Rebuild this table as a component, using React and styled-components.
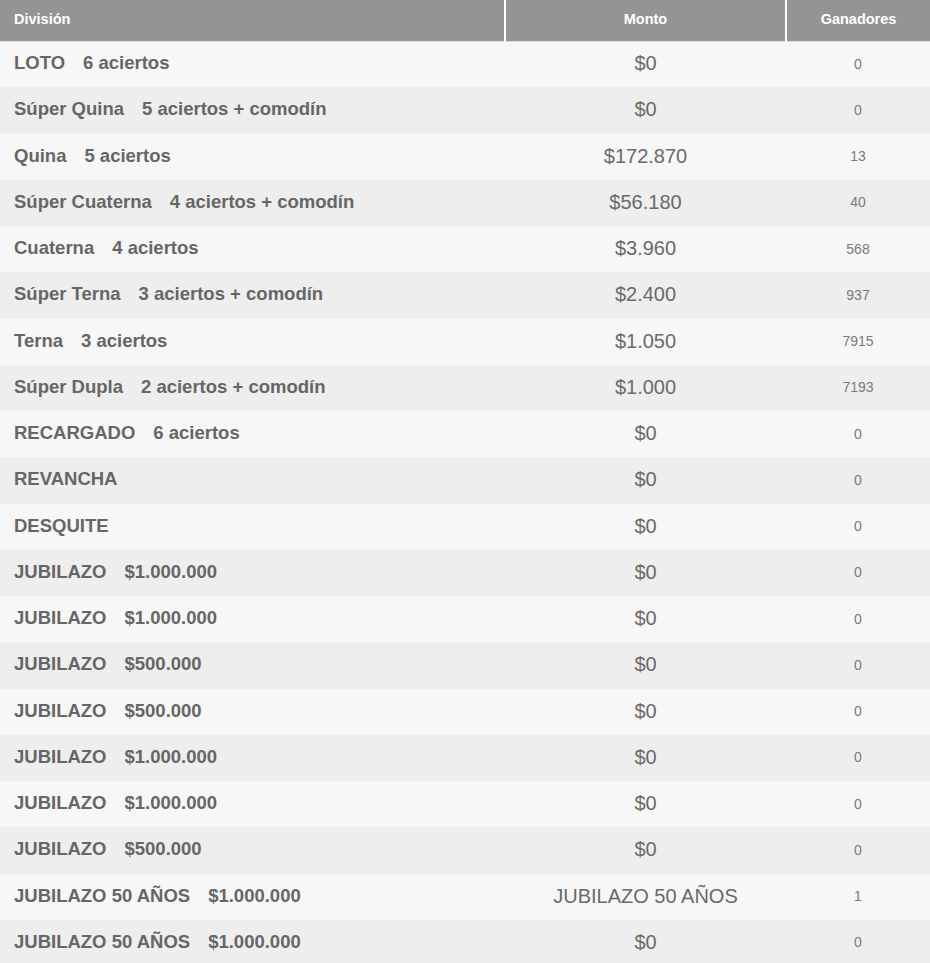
import React from 'react'
import styled, {createGlobalStyle} from 'styled-components'

const GlobalStyle = createGlobalStyle`
  html, body {
    margin: 0;
    padding: 0;
    background: #ffffff;
  }
  body {
    font-family: "Liberation Sans", Arial, sans-serif;
  }
`

const Table = styled.table`
  width: 930px;
  border-collapse: collapse;
  table-layout: fixed;
`

const HeadCell = styled.th`
  height: 41px;
  box-sizing: border-box;
  padding: 0 14px 2px;
  background: #949494;
  color: #ffffff;
  font-size: 14.5px;
  font-weight: bold;
  text-align: ${props => props.align || 'center'};
  border-left: ${props => props.first ? 'none' : '2px solid #ffffff'};
  border-bottom: 1px solid #dcdcdc;
  vertical-align: middle;
`

const Row = styled.tr`
  height: 46.25px;
  background: ${props => props.odd ? '#eeeeee' : '#f7f7f7'};
`

const DivisionCell = styled.td`
  padding: 0 14px 2px;
  color: #666666;
  font-size: 18.5px;
  font-weight: bold;
  white-space: nowrap;
`

const Detail = styled.span`
  margin-left: 18px;
`

const MontoCell = styled.td`
  text-align: center;
  color: #6a6a6a;
  font-size: 20px;
  padding-bottom: 2px;
`

const GanadoresCell = styled.td`
  text-align: center;
  color: #7a7a7a;
  font-size: 14px;
  padding-bottom: 2px;
`

const rows = [
  ['LOTO', '6 aciertos', '$0', '0'],
  ['Súper Quina', '5 aciertos + comodín', '$0', '0'],
  ['Quina', '5 aciertos', '$172.870', '13'],
  ['Súper Cuaterna', '4 aciertos + comodín', '$56.180', '40'],
  ['Cuaterna', '4 aciertos', '$3.960', '568'],
  ['Súper Terna', '3 aciertos + comodín', '$2.400', '937'],
  ['Terna', '3 aciertos', '$1.050', '7915'],
  ['Súper Dupla', '2 aciertos + comodín', '$1.000', '7193'],
  ['RECARGADO', '6 aciertos', '$0', '0'],
  ['REVANCHA', '', '$0', '0'],
  ['DESQUITE', '', '$0', '0'],
  ['JUBILAZO', '$1.000.000', '$0', '0'],
  ['JUBILAZO', '$1.000.000', '$0', '0'],
  ['JUBILAZO', '$500.000', '$0', '0'],
  ['JUBILAZO', '$500.000', '$0', '0'],
  ['JUBILAZO', '$1.000.000', '$0', '0'],
  ['JUBILAZO', '$1.000.000', '$0', '0'],
  ['JUBILAZO', '$500.000', '$0', '0'],
  ['JUBILAZO 50 AÑOS', '$1.000.000', 'JUBILAZO 50 AÑOS', '1'],
  ['JUBILAZO 50 AÑOS', '$1.000.000', '$0', '0']
]

const App = () =>
  <>
    <GlobalStyle />
    <Table>
      <colgroup>
        <col style={{width: '505px'}} />
        <col style={{width: '281px'}} />
        <col style={{width: '144px'}} />
      </colgroup>
      <thead>
        <tr>
          <HeadCell first align='left'>División</HeadCell>
          <HeadCell>Monto</HeadCell>
          <HeadCell>Ganadores</HeadCell>
        </tr>
      </thead>
      <tbody>
        {rows.map(([name, detail, monto, ganadores], i) =>
          <Row key={i} odd={i % 2 === 1}>
            <DivisionCell>
              {name}
              {detail && <Detail>{detail}</Detail>}
            </DivisionCell>
            <MontoCell>{monto}</MontoCell>
            <GanadoresCell>{ganadores}</GanadoresCell>
          </Row>
        )}
      </tbody>
    </Table>
  </>

export default App
